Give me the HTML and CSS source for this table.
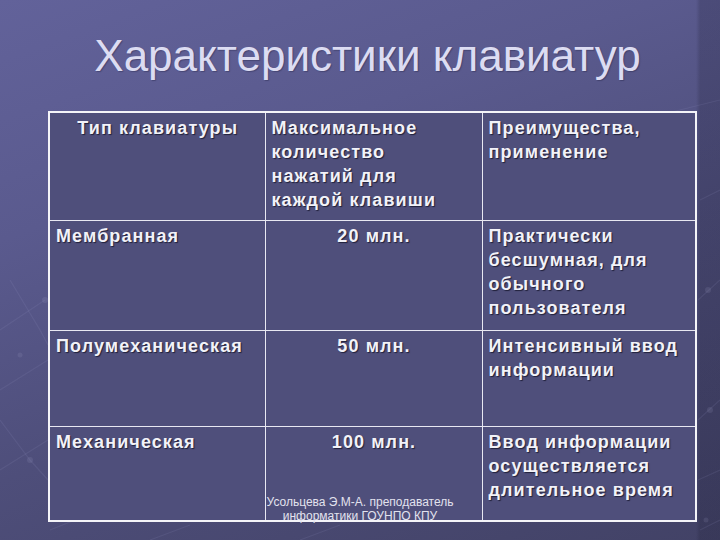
FILE: index.html
```html
<!DOCTYPE html>
<html lang="ru">
<head>
<meta charset="utf-8">
<title>Характеристики клавиатур</title>
<link rel="stylesheet" href="styles.css">
</head>
<body>
<div class="slide">
  <svg class="pattern" width="720" height="540" viewBox="0 0 720 540" aria-hidden="true">
    <g stroke="#9a9ac8" stroke-opacity="0.13" stroke-width="1.2" fill="none">
      <path d="M0 330 L45 300"/>
      <path d="M0 390 L48 360"/>
      <path d="M0 470 L48 440"/>
      <path d="M10 280 L40 330 L48 345"/>
      <path d="M0 420 L30 460 L48 480"/>
      <path d="M50 530 L75 520"/>
      <path d="M150 540 L190 525"/>
      <path d="M300 540 L340 525"/>
      <path d="M640 120 L720 100"/>
      <path d="M698 300 L720 280"/>
      <path d="M698 420 L720 400"/>
      <path d="M700 200 L720 190"/>
      <path d="M698 480 L720 470"/>
      <path d="M700 530 L720 520"/>
    </g>
    <g fill="#a8a8d0" fill-opacity="0.14">
      <circle cx="45" cy="300" r="3"/>
      <circle cx="30" cy="460" r="3"/>
      <circle cx="20" cy="355" r="2.5"/>
      <circle cx="708" cy="290" r="3"/>
      <circle cx="710" cy="410" r="3"/>
      <circle cx="706" cy="520" r="2.5"/>
    </g>
  </svg>
  <h1 class="title">Характеристики клавиатур</h1>
  <table class="specs">
    <colgroup>
      <col class="c1"><col class="c2"><col class="c3">
    </colgroup>
    <tr class="r-head">
      <td class="center">Тип клавиатуры</td>
      <td>Максимальное<br>количество<br>нажатий для<br>каждой клавиши</td>
      <td>Преимущества, применение</td>
    </tr>
    <tr class="r-1">
      <td>Мембранная</td>
      <td class="center">20 млн.</td>
      <td>Практически бесшумная, для обычного пользователя</td>
    </tr>
    <tr class="r-2">
      <td>Полумеханическая</td>
      <td class="center">50 млн.</td>
      <td>Интенсивный ввод информации</td>
    </tr>
    <tr class="r-3">
      <td>Механическая</td>
      <td class="center">100 млн.</td>
      <td>Ввод информации осуществляется длительное время</td>
    </tr>
  </table>
  <div class="footer">Усольцева Э.М-А. преподаватель<br>информатики ГОУНПО КПУ</div>
</div>
</body>
</html>
```

FILE: styles.css
```css
html, body {
  margin: 0;
  padding: 0;
  background: #4a4a70;
}

.slide {
  position: relative;
  width: 720px;
  height: 540px;
  overflow: hidden;
  display: flex;
  flex-direction: column;
  padding-left: 48px;
  box-sizing: border-box;
  background:
    linear-gradient(90deg, rgba(0,0,0,0) 0, rgba(0,0,0,0) 696px, rgba(20,20,40,0.2) 700px),
    linear-gradient(160deg, #62629a 0%, #5a5a8e 30%, #4e4e7a 60%, #424266 100%);
  font-family: "Liberation Sans", Arial, sans-serif;
}

.pattern {
  position: absolute;
  left: 0;
  top: 0;
  pointer-events: none;
}

.title {
  position: relative;
  width: 647px;
  height: 111px;
  margin: 0;
  box-sizing: border-box;
  padding-top: 31px;
  padding-right: 8px;
  text-align: center;
  font-weight: normal;
  font-size: 44px;
  line-height: 50px;
  color: #dcdcf2;
  text-shadow: 1px 1px 1px rgba(30,30,60,0.35);
}

.specs {
  position: relative;
  width: 647px;
  border-collapse: collapse;
  table-layout: fixed;
  border: 2px solid #f4f4f8;
  background: #4f4f7b;
}

.c1 { width: 216px; }
.c2 { width: 217px; }
.c3 { width: 214px; }

.specs td {
  border: 1px solid #e8e8f2;
  vertical-align: top;
  padding: 3px 5px 0 6px;
  font-weight: bold;
  font-size: 18px;
  line-height: 24px;
  letter-spacing: 1.1px;
  color: #f2f2f8;
  text-shadow: 1px 1px 1px #20203a;
}

.specs td.center { text-align: center; }

.r-head { height: 108px; }
.r-1 { height: 110px; }
.r-2 { height: 96px; }
.r-3 { height: 95px; }

.footer {
  position: absolute;
  left: 0;
  right: 0;
  top: 495px;
  text-align: center;
  font-size: 12px;
  line-height: 14px;
  color: #e2e2ee;
}
```
